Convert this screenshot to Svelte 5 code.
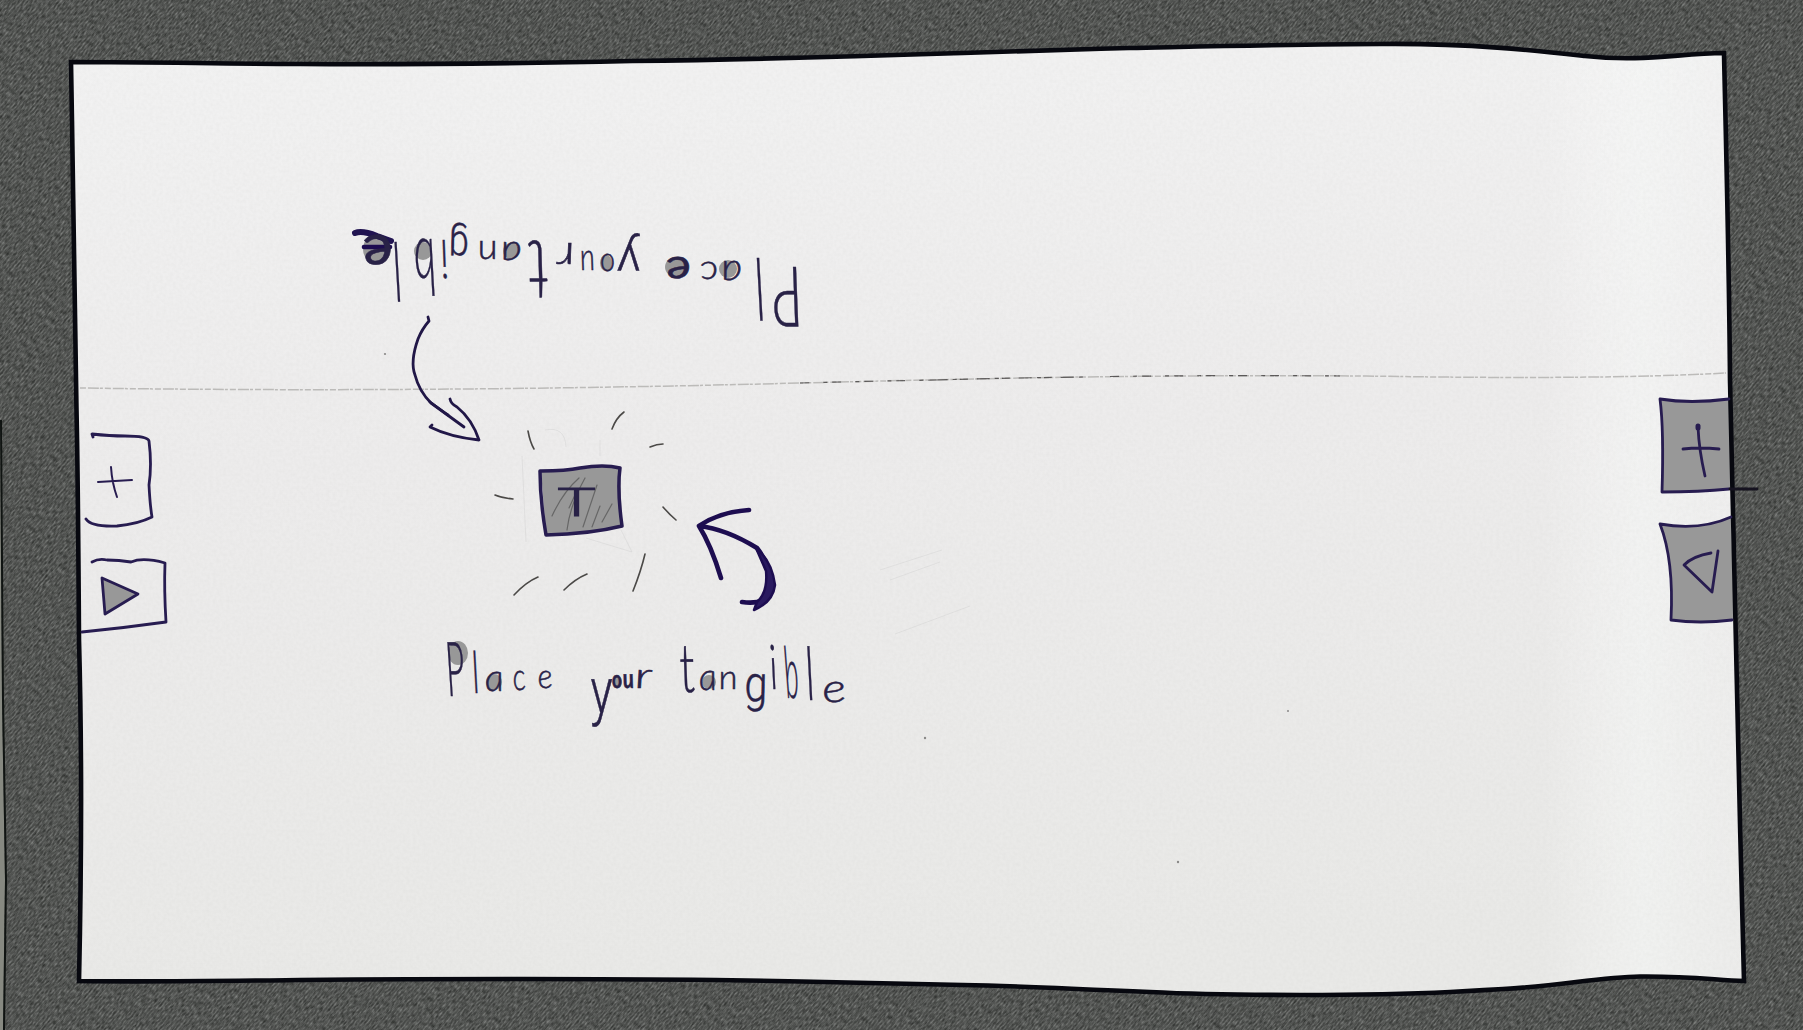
<script>
  // Each glyph: character, left x, baseline y, width, font size, weight
  const lower = [
    ['P', 448, 696, 19, 76, 300], ['l', 474, 693, 7, 58, 300], ['a', 486, 691, 19, 38, 300], ['c', 514, 690, 13, 38, 300], ['e', 539, 688, 15, 34, 300], [' ', 556, 688, 8, 30, 400],
    ['y', 590, 713, 22, 64, 300], ['o', 613, 688, 10, 25, 700], ['u', 624, 688, 11, 27, 700], ['r', 636, 688, 18, 36, 300], [' ', 655, 688, 8, 30, 400],
    ['t', 682, 692, 16, 68, 300], ['a', 700, 690, 18, 38, 300], ['n', 720, 689, 19, 34, 300], ['g', 745, 701, 23, 50, 300], ['i', 772, 689, 8, 62, 300], ['b', 786, 698, 14, 72, 300], ['l', 807, 700, 9, 74, 300], ['e', 822, 702, 24, 40, 300]
  ];
  // The upper line is read from the opposite side: right edge x, baseline y
  const upper = [
    ['P', 798, 267, 31, 84, 300], ['l', 761, 258, 10, 86, 300], ['a', 740, 261, 21, 38, 300], ['c', 716, 262, 18, 34, 300], ['e', 689, 257, 25, 42, 400], [' ', 660, 257, 8, 30, 400],
    ['y', 640, 244, 23, 50, 300], ['o', 614, 254, 15, 34, 300], ['u', 594, 251, 15, 38, 300], ['r', 575, 243, 19, 42, 300], [' ', 555, 243, 8, 30, 400],
    ['t', 547, 241, 22, 84, 300], ['a', 522, 242, 21, 36, 300], ['n', 498, 241, 20, 36, 300], ['g', 470, 232, 20, 44, 300], ['i', 448, 240, 8, 54, 300], ['b', 435, 239, 22, 78, 300], ['l', 400, 242, 9, 82, 300], ['e', 393, 235, 30, 58, 400]
  ];
  const shadesUpper = [[377, 249, 14, 15], [423, 251, 9, 9], [511, 251, 8, 8], [606, 263, 6, 8], [676, 267, 11, 10], [728, 269, 9, 9]];
  const shadesLower = [[458, 653, 10, 12], [494, 682, 8, 8], [618, 682, 4, 6], [709, 682, 7, 7]];
  const rays = ['M528 431 Q530 442 534 449', 'M612 429 Q616 418 624 412', 'M650 447 Q657 444 663 444', 'M495 495 Q502 498 513 499', 'M663 507 Q669 514 676 520', 'M514 595 Q526 582 538 577', 'M564 590 Q575 579 587 574', 'M645 554 Q641 571 633 591'];
  const sheet = 'M71 62C165 62 220 64 300 64C430 65 540 63 632 61C780 59 870 56 963 53C1040 51 1080 49 1129 48C1230 46 1320 44 1380 44C1470 43 1540 51 1585 56C1642 62 1675 54 1724 53C1726 145 1729 255 1730 380C1733 500 1738 760 1744 981C1715 980 1690 976 1640 976.5C1600 977 1560 986 1503 989C1485 990 1470 991 1450 992C1370 996 1230 996 1150 992C1050 988 1020 986 963 985C860 983 800 981 715 980C540 978 420 979 300 980C220 981 150 982 79 981C81 890 82 750 79 640C78.500 560 78 480 76.500 410C75 300 73 180 71 62Z';
</script>

<main class="desk">
  <svg class="scene" viewBox="0 0 1803 1030" role="img" aria-label="Tabletop sketch">
    <defs>
      <filter id="weave" x="0" y="0" width="100%" height="100%" color-interpolation-filters="sRGB">
        <feTurbulence type="fractalNoise" baseFrequency="0.6 0.22" numOctaves="2" seed="8" />
        <feColorMatrix values="0.8 0 0 0 -0.035  0.8 0 0 0 -0.025  0.8 0 0 0 -0.035  0 0 0 0 1" />
      </filter>
      <filter id="paperGrain" x="0" y="0" width="100%" height="100%">
        <feTurbulence type="fractalNoise" baseFrequency="0.3" numOctaves="2" seed="3" />
        <feColorMatrix values="0 0 0 0 0.4  0 0 0 0 0.4  0 0 0 0 0.38  0.12 0 0 0 -0.035" />
      </filter>
      <pattern id="twill" width="3" height="8" patternUnits="userSpaceOnUse" patternTransform="rotate(40)">
        <path d="M1 0V8" class="thread" />
      </pattern>
      <linearGradient id="paper" x1="0" y1="0" x2="0.1" y2="1">
        <stop offset="0" stop-color="#f2f2f2" />
        <stop offset="0.45" stop-color="#edecec" />
        <stop offset="1" stop-color="#e9e9e7" />
      </linearGradient>
      <linearGradient id="curl">
        <stop offset="0.88" stop-color="#fff" stop-opacity="0" />
        <stop offset="0.94" stop-color="#f8faf9" stop-opacity="0.5" />
        <stop offset="1" stop-color="#f4f4f4" stop-opacity="0.3" />
      </linearGradient>
      <clipPath id="sheetClip"><path d={sheet} /></clipPath>
    </defs>

    <rect width="1803" height="1030" class="cloth" />
    <g transform="rotate(40 900 515)"><rect x="-300" y="-600" width="2400" height="2300" filter="url(#weave)" opacity="0.6" /></g>
    <rect width="1803" height="1030" fill="url(#twill)" />
    <path d="M0 420L2 700L5 880L3 1030H0Z" class="rim" />
    <path d="M1 420L3 700L6 880L4 1030" class="rimLine" />

    <path d={sheet} fill="url(#paper)" />
    <path d={sheet} fill="url(#curl)" />
    <g clip-path="url(#sheetClip)"><rect width="1803" height="1030" filter="url(#paperGrain)" /></g>

    <g class="fold">
      <path d="M80 388Q420 393 800 383Q1000 378 1085 377Q1230 375 1366 376Q1600 380 1726 373" />
      <path class="dark" d="M935 380Q1000 378 1085 377" />
      <path class="dark faint" d="M800 383Q880 381 935 380M1110 376.500Q1230 375 1340 376" />
    </g>
    <g class="crease">
      <path d="M522 456L526 542M545 430Q565 426 566 447M586 538L632 552L621 530M880 570L942 550M890 580L940 562M895 634L970 606M600 440V456" />
    </g>
    <g class="speck"><circle cx="925" cy="738" r="1.2" /><circle cx="1178" cy="862" r="1.2" /><circle cx="1288" cy="711" r="1" /><circle cx="385" cy="354" r="1.1" /></g>

    <g class="fill">
      <path d="M1661 399Q1690 404 1729 399L1732 489Q1700 492 1662 492Z" />
      <path d="M1660 525Q1700 530 1731 517L1734 620Q1700 624 1671 620Q1674 560 1660 525Z" />
    </g>
    <path d={sheet} class="border" />

    <g class="fill">
      {#each [...shadesUpper, ...shadesLower] as [cx, cy, rx, ry]}<ellipse {cx} {cy} {rx} {ry} />{/each}
      <path d="M102 578L138 594L105 614Z" />
      <path d="M541 471Q580 471 598 466L620 468L622 526Q590 534 546 534Z" />
    </g>

    <g class="pencil">
      {#each rays as d}<path {d} />{/each}
      <path class="hatch" d="M552 516Q563 492 579 478M567 530Q570 505 585 478M583 527L597 485M602 522L612 504M592 527L600 506M569 508L575 495" />
    </g>

    <g class="ink">
      <path d="M93 437L92 434Q110 436 125 436Q148 436 149 441Q152 465 149 485Q150 505 152 517Q138 524 117 526Q91 527 86 519" />
      <path class="fine" d="M98 482L132 480M111 467Q112 483 117 497" />
      <path d="M92 562Q99 558 107 560Q119 560 131 562Q143 557 165 563Q164 590 166 622Q123 628 82 632" />
      <path d="M102 578L138 594L105 614Z" />
      <path d="M1729 399Q1690 404 1660 399Q1664 430 1662 492Q1700 492 1729 489M1698 427Q1699 450 1705 476M1683 449Q1700 447 1719 449" />
      <path class="overrun" d="M1730 489L1757 489" />
      <path class="dot" d="M1698 426V428" />
      <path d="M1731 517Q1700 531 1660 524Q1674 560 1671 620Q1700 624 1732 620M1711 553Q1693 556 1684 565L1712 592L1718 551" />
      <path d="M541 471Q566 471 580 468Q604 464 620 468Q617 490 622 526Q590 534 546 535Q540 500 540 471Z" class="tile" />
      <path d="M428 317L429 321Q422 329 418 339C412 356 412 367 415 375C418 387 424 396 431 403L464 427" class="arrow" />
      <path d="M430 402Q442 411 448 415M450 399Q451 404 457 407Q472 419 479 440Q450 437 430 427L432 425" class="arrow" />
      <path class="bold" d="M749 510Q719 512 699 526Q711 545 721 578M699 526Q726 529 757 548Q780 578 763 600Q755 604 742 602" />
      <path class="stroke" d="M756 548Q772 561 775 585Q773 602 754 610L757 602Q768 592 766 571Z" />
      <path class="heavy" d="M355 233Q362 230 377 236L391 241" />
      <path class="bold" d="M364 247H390" />
    </g>

    <text class="label tileText"><tspan x="558" y="516" font-size="39" textLength="37" lengthAdjust="spacingAndGlyphs">T</tspan></text>
    <g transform="translate(0 690) skewX(7) translate(0 -690)">
      <text class="label">{#each lower as [c, x, y, w, s, b]}<tspan {x} {y} textLength={w} lengthAdjust="spacingAndGlyphs" font-size={s} font-weight={b} class:looped={c === 'g' || c === 'y'}>{c}</tspan>{/each}</text>
    </g>
    <g transform="translate(0 255) skewX(7) translate(0 -255) rotate(180)">
      <text class="label">{#each upper as [c, x, y, w, s, b]}<tspan x={-x} y={-y} textLength={w} lengthAdjust="spacingAndGlyphs" font-size={s} font-weight={b} class:looped={c === 'g' || c === 'y'}>{c}</tspan>{/each}</text>
    </g>
  </svg>
</main>

<style>
  :global(body) { margin: 0; overflow: hidden; background: #5a5c59; }
  .desk { display: flex; width: 1803px; height: 1030px; }
  .scene { display: block; width: 100%; height: 100%; }
  .cloth { fill: #5f615e; }
  .thread { stroke: #1c1f1c; stroke-width: 1.2; opacity: 0.42; }
  .rim { fill: #878981; }
  .rimLine { fill: none; stroke: #101412; stroke-width: 2; }
  .border { fill: none; stroke: #07080f; stroke-width: 4.6; stroke-linejoin: miter; }
  .fold path { fill: none; stroke: #bcbbb9; stroke-width: 1.5; stroke-dasharray: 6 2 11 1 3 2; }
  .fold .dark { stroke: #4a4848; stroke-width: 1.2; stroke-dasharray: 13 5 4 3 8 9; opacity: 0.85; }
  .fold .faint { stroke-dasharray: 9 14 4 5; }
  .crease path { fill: none; stroke: #c9c9c8; stroke-width: 1; opacity: 0.35; }
  .speck { fill: #8a8988; }
  .fill { fill: #989898; }
  .pencil path { fill: none; stroke: #4b4947; stroke-width: 1.6; stroke-linecap: round; }
  .pencil .hatch { stroke: #555; stroke-width: 1.2; opacity: 0.75; }
  .ink path { fill: none; stroke: #271c50; stroke-width: 2.8; stroke-linecap: round; stroke-linejoin: round; }
  .ink .fine { stroke-width: 2; }
  .ink .overrun { stroke: #15121f; }
  .ink .dot { stroke-width: 5; }
  .ink .tile { stroke-width: 3.5; }
  .ink .arrow { stroke-width: 2.8; stroke: #211747; }
  .ink .bold { stroke-width: 4.6; stroke: #1d0d50; }
  .ink .stroke { fill: #2a1a60; stroke: #1d0d50; stroke-width: 2.5; }
  .ink .heavy { stroke-width: 6; stroke: #211451; }
  .label { font-family: Lato, "Open Sans", sans-serif; font-style: italic; fill: #292247; stroke: #292247; stroke-width: 0.5; }
  .looped { font-family: Roboto, Lato, sans-serif; }
  .tileText { font-style: normal; font-weight: 300; stroke-width: 1.2; }
</style>
